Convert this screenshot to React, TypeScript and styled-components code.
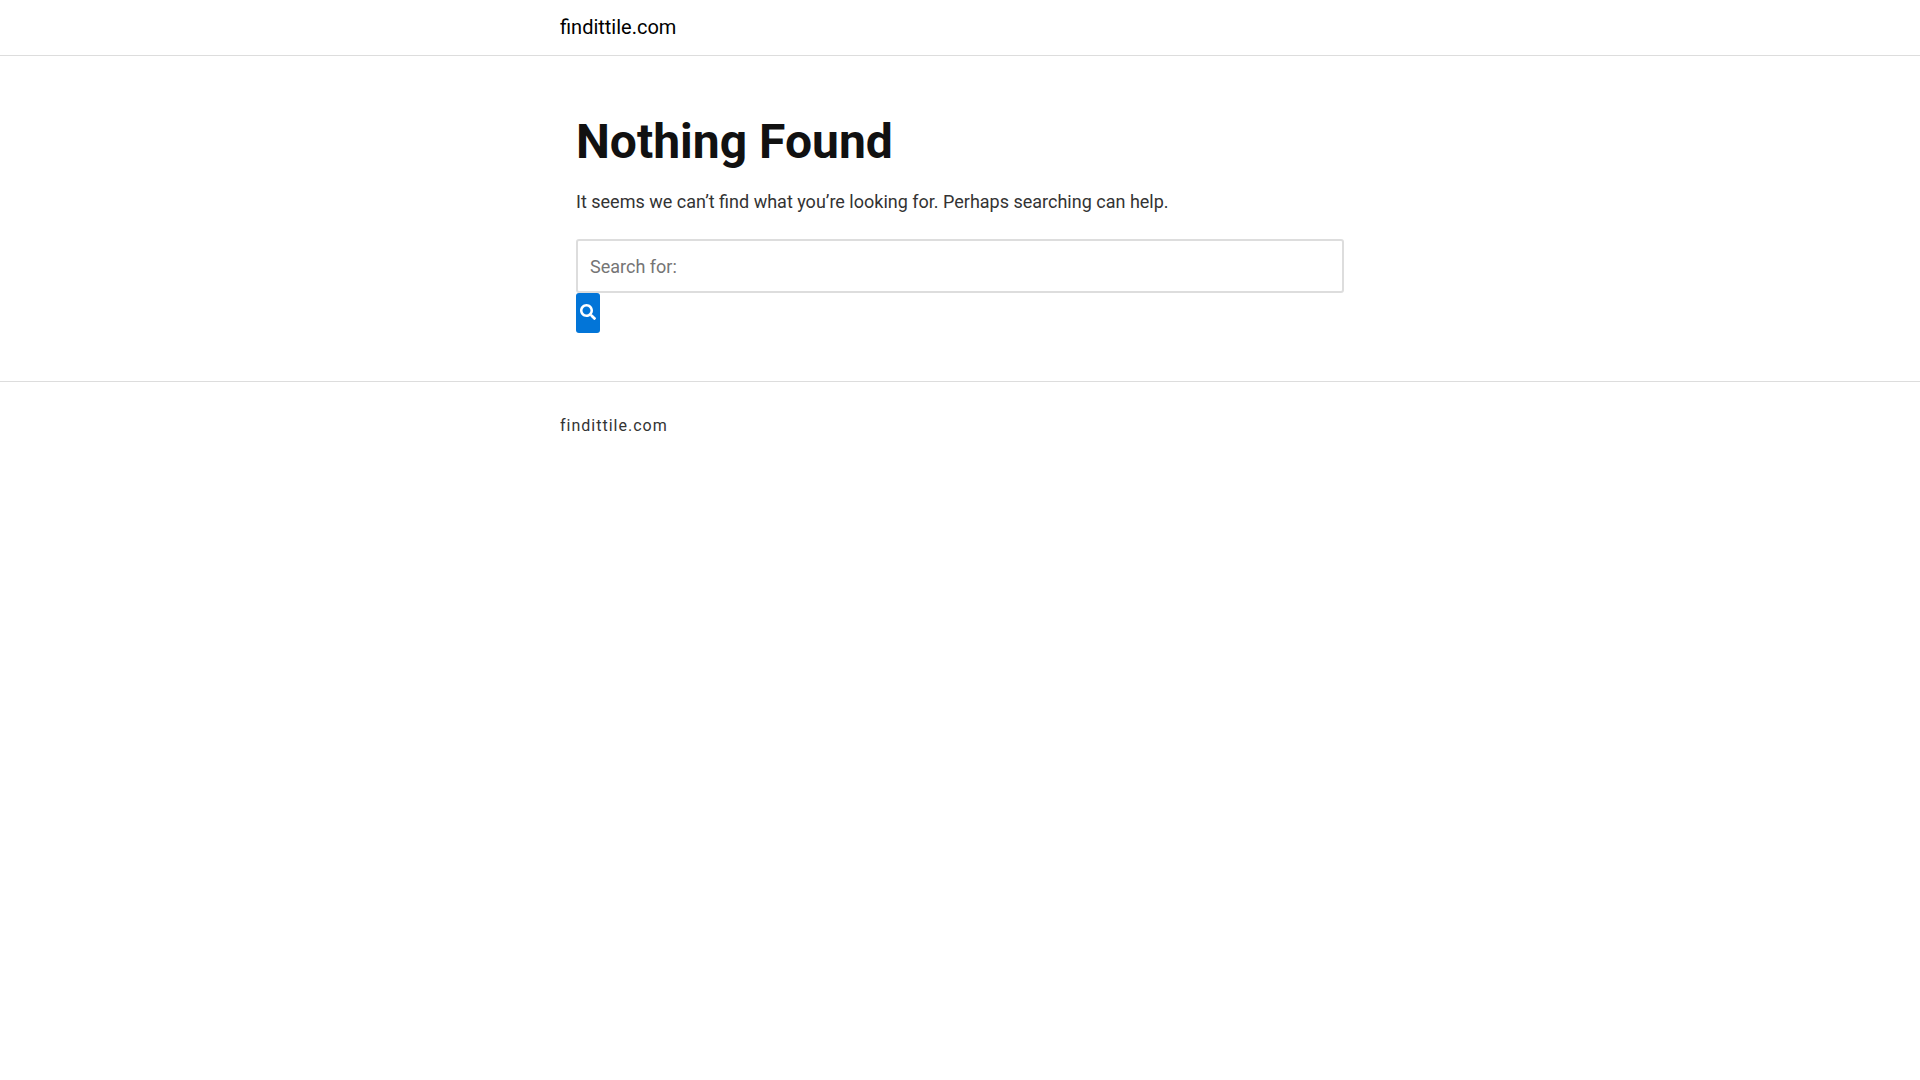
import React from "react";
import styled, { createGlobalStyle } from "styled-components";

const GlobalStyle = createGlobalStyle`
  *, *::before, *::after { box-sizing: border-box; }
  body {
    margin: 0;
    background: #fff;
    color: #333;
    font-family: Roboto, "Liberation Sans", sans-serif;
    font-size: 18px;
    line-height: 27px;
  }
`;

const Header = styled.header`
  padding: 14px 0;
  border-bottom: 1px solid #ddd;
`;

const Container = styled.div`
  width: 100%;
  max-width: 800px;
  margin: 0 auto;
`;

const Brand = styled.a`
  color: #000;
  font-size: 20px;
  text-decoration: none;
`;

const Main = styled.main`
  width: 100%;
  max-width: 800px;
  margin: 0 auto;
  padding: 56px 16px 48px;
`;

const Title = styled.h1`
  margin: 0 0 16px;
  color: #111;
  font-size: 48px;
  line-height: 60px;
  font-weight: 700;
`;

const Message = styled.p`
  margin: 0 0 24px;
`;

const SearchForm = styled.form`
  display: flex;
  flex-direction: column;
  align-items: flex-start;
`;

const SearchLabel = styled.label`
  display: block;
  width: 100%;
`;

const SearchInput = styled.input`
  display: block;
  width: 100%;
  height: 54px;
  padding: 0 12px;
  border: 2px solid #ddd;
  border-radius: 3px;
  background: #fff;
  color: #333;
  font: inherit;
  &::placeholder { color: #757575; opacity: 1; }
`;

const SearchButton = styled.button`
  display: flex;
  justify-content: center;
  width: 24px;
  height: 40px;
  padding: 11px 0 0;
  border: 0;
  border-radius: 3px;
  background: #0275d8;
  color: #fff;
  cursor: pointer;
`;

const Footer = styled.footer`
  padding: 30px 0;
  border-top: 1px solid #ddd;
  font-size: 16px;
  letter-spacing: 1px;
`;

export default function App() {
  return (
    <>
      <GlobalStyle />
      <Header>
        <Container><Brand href="#">findittile.com</Brand></Container>
      </Header>
      <Main>
        <Title>Nothing Found</Title>
        <Message>It seems we can’t find what you’re looking for. Perhaps searching can help.</Message>
        <SearchForm role="search" onSubmit={(e) => e.preventDefault()}>
          <SearchLabel htmlFor="search">
            <SearchInput id="search" type="search" placeholder="Search for:" aria-label="Search for:" />
          </SearchLabel>
          <SearchButton type="submit" aria-label="Search">
            <svg width="16" height="16" viewBox="0 0 512 512" fill="currentColor" aria-hidden="true">
              <path d="M505 442.700 405.300 343c-4.500-4.500-10.600-7-17-7H372c27.600-35.300 44-79.700 44-128C416 93.100 322.900 0 208 0S0 93.100 0 208s93.100 208 208 208c48.300 0 92.700-16.400 128-44v16.300c0 6.400 2.500 12.500 7 17l99.700 99.700c9.400 9.400 24.600 9.400 33.900 0l28.300-28.300c9.400-9.400 9.400-24.600.1-34zM208 336c-70.700 0-128-57.200-128-128 0-70.700 57.200-128 128-128 70.700 0 128 57.200 128 128 0 70.700-57.200 128-128 128z" />
            </svg>
          </SearchButton>
        </SearchForm>
      </Main>
      <Footer><Container>findittile.com</Container></Footer>
    </>
  );
}
